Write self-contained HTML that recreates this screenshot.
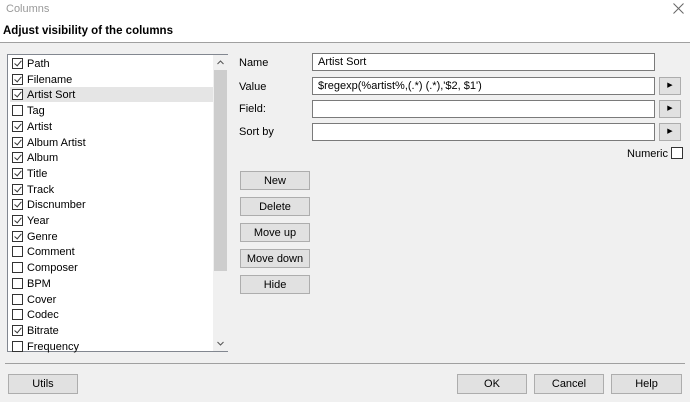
<!DOCTYPE html>
<html><head><style>
*{margin:0;padding:0;box-sizing:border-box}
body{width:690px;height:402px;background:#f0f0f0;font-family:"Liberation Sans",sans-serif;font-size:11px;color:#000;position:relative;overflow:hidden}
.top{position:absolute;left:0;top:0;width:690px;height:43px;background:#fff;border-bottom:1px solid #a0a0a0}
.abs{position:absolute}
.list{position:absolute;left:7px;top:54px;width:221px;height:298px;background:#fff;border:1px solid #828790}
.row{position:absolute;left:2px;width:203px;height:15px;line-height:16px;padding-left:17px}
.row.sel{background:#e5e5e5}
.cb{position:absolute;left:2px;top:2px;width:11px;height:11px;border:1px solid #333;background:#fff}
.cb.on::after{content:"";position:absolute;left:3px;top:0px;width:3px;height:6px;border:solid #333;border-width:0 1px 1px 0;transform:rotate(40deg)}
.sb{position:absolute;left:205px;top:0;width:15px;height:296px;background:#f0f0f0}
.thumb{position:absolute;left:1px;top:15px;width:13px;height:201px;background:#cdcdcd}
.lbl{position:absolute;left:239px}
.inp{position:absolute;left:312px;height:18px;background:#fff;border:1px solid #7a7a7a;padding-left:5px;line-height:16px;font-size:11px}
.arr{position:absolute;left:659px;width:22px;height:18px;background:#e1e1e1;border:1px solid #adadad;font-size:7px;text-align:center;line-height:16px}
.btn{position:absolute;background:#e1e1e1;border:1px solid #adadad;text-align:center;font-size:11px}
</style></head><body>
<div class="top"></div>
<div class="abs" style="left:6px;top:3px;color:#999;font-size:11px">Columns</div>
<svg class="abs" style="left:673px;top:3px" width="11" height="11"><path d="M0.5 0.5L10.5 10.5M10.5 0.5L0.5 10.5" stroke="#666" stroke-width="1"/></svg>
<div class="abs" style="left:3px;top:25px;font-weight:bold;font-size:11.5px">Adjust visibility of the columns</div>

<div class="list">
<div class="row" style="top:1px"><span class="cb on"></span>Path</div>
<div class="row" style="top:16.7px"><span class="cb on"></span>Filename</div>
<div class="row sel" style="top:32.4px"><span class="cb on"></span>Artist Sort</div>
<div class="row" style="top:48.1px"><span class="cb"></span>Tag</div>
<div class="row" style="top:63.8px"><span class="cb on"></span>Artist</div>
<div class="row" style="top:79.5px"><span class="cb on"></span>Album Artist</div>
<div class="row" style="top:95.2px"><span class="cb on"></span>Album</div>
<div class="row" style="top:110.9px"><span class="cb on"></span>Title</div>
<div class="row" style="top:126.6px"><span class="cb on"></span>Track</div>
<div class="row" style="top:142.3px"><span class="cb on"></span>Discnumber</div>
<div class="row" style="top:158px"><span class="cb on"></span>Year</div>
<div class="row" style="top:173.7px"><span class="cb on"></span>Genre</div>
<div class="row" style="top:189.4px"><span class="cb"></span>Comment</div>
<div class="row" style="top:205.1px"><span class="cb"></span>Composer</div>
<div class="row" style="top:220.8px"><span class="cb"></span>BPM</div>
<div class="row" style="top:236.5px"><span class="cb"></span>Cover</div>
<div class="row" style="top:252.2px"><span class="cb"></span>Codec</div>
<div class="row" style="top:267.9px"><span class="cb on"></span>Bitrate</div>
<div class="row" style="top:283.6px"><span class="cb"></span>Frequency</div>
<div class="sb">
<svg class="abs" style="left:4px;top:5px" width="7" height="5"><path d="M0.5 4L3.5 1L6.5 4" stroke="#555" fill="none"/></svg>
<div class="thumb"></div>
<svg class="abs" style="left:4px;top:286px" width="7" height="5"><path d="M0.5 1L3.5 4L6.5 1" stroke="#555" fill="none"/></svg>
</div>
</div>

<div class="lbl" style="top:57px">Name</div>
<div class="lbl" style="top:81px">Value</div>
<div class="lbl" style="top:103px">Field:</div>
<div class="lbl" style="top:126px">Sort by</div>
<div class="inp" style="top:53px;width:343px">Artist Sort</div>
<div class="inp" style="top:77px;width:343px">$regexp(%artist%,(.*) (.*),'$2, $1')</div>
<div class="inp" style="top:100px;width:343px"></div>
<div class="inp" style="top:123px;width:343px"></div>
<div class="arr" style="top:77px">▶</div>
<div class="arr" style="top:100px">▶</div>
<div class="arr" style="top:123px">▶</div>
<div class="abs" style="left:620px;width:48px;text-align:right;top:148px">Numeric</div>
<div class="abs" style="left:671px;top:147px;width:12px;height:12px;border:1px solid #333;background:#fff"></div>

<div class="btn" style="left:240px;top:171px;width:70px;height:19px;line-height:18px">New</div>
<div class="btn" style="left:240px;top:197px;width:70px;height:19px;line-height:18px">Delete</div>
<div class="btn" style="left:240px;top:223px;width:70px;height:19px;line-height:18px">Move up</div>
<div class="btn" style="left:240px;top:249px;width:70px;height:19px;line-height:18px">Move down</div>
<div class="btn" style="left:240px;top:275px;width:70px;height:19px;line-height:18px">Hide</div>

<div class="abs" style="left:5px;top:363px;width:680px;height:1px;background:#a0a0a0"></div>
<div class="btn" style="left:8px;top:374px;width:70px;height:20px;line-height:19px">Utils</div>
<div class="btn" style="left:457px;top:374px;width:70px;height:20px;line-height:19px">OK</div>
<div class="btn" style="left:534px;top:374px;width:70px;height:20px;line-height:19px">Cancel</div>
<div class="btn" style="left:611px;top:374px;width:71px;height:20px;line-height:19px">Help</div>
</body></html>
